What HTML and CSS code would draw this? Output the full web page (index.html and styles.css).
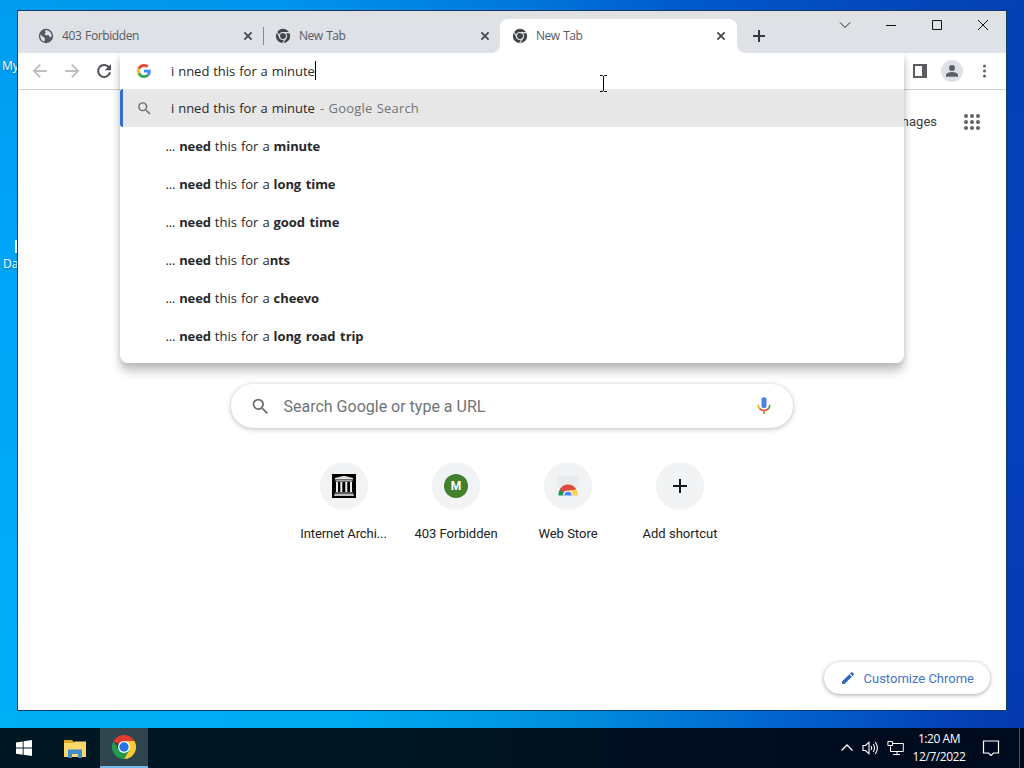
FILE: index.html
```html
<!DOCTYPE html>
<html lang="en">
<head>
<meta charset="utf-8">
<title>New Tab</title>
<link rel="stylesheet" href="styles.css">
</head>
<body>
<svg class="defs" width="0" height="0">
  <symbol id="chrome-mono" viewBox="0 0 16 16">
    <circle cx="8" cy="8" r="7.2" fill="#41464b"/>
    <g stroke="#dee1e6" stroke-width="1.1" fill="none"><path d="M8 4.6H14.6M5.1 9.7L1.8 4M10.9 9.7L7.6 15.4"/><circle cx="8" cy="8" r="3.5"/></g>
    <circle cx="8" cy="8" r="2.1" fill="#41464b"/>
  </symbol>
  <symbol id="close" viewBox="0 0 10 10"><path d="M1.4 1.4L8.6 8.6M8.6 1.4L1.4 8.6" stroke="#41464c" stroke-width="1.7"/></symbol>
  <symbol id="search" viewBox="0 0 24 24"><path fill="#6b6f73" d="M15.5 14h-.79l-.28-.27A6.47 6.47 0 0 0 16 9.5 6.5 6.5 0 1 0 9.5 16c1.61 0 3.09-.59 4.23-1.57l.27.28v.79l5 4.99L20.49 19l-4.99-5zm-6 0C7.01 14 5 11.99 5 9.5S7.01 5 9.5 5 14 7.01 14 9.5 11.99 14 9.5 14z"/></symbol>
</svg>
<div class="desktop">
  <span class="desk-label my">My</span>
  <span class="desk-mark"></span>
  <span class="desk-label da">Da</span>

  <div class="window">
    <div class="tabs">
      <div class="tab first">
        <svg width="16" height="16" viewBox="0 0 16 16"><circle cx="8" cy="8" r="7.2" fill="#565a5f"/><path d="M2.2 6.6L5.7 9.2 7 10.4 6.3 13.7C3.6 13 2 10.8 2.2 6.6ZM7.8 2.1L7 3.3 7.8 4.6 6.4 6.2 8.1 7.2 10.6 7 11.6 9 13.7 8.8C13.9 5.5 11.6 2.4 7.8 2.1Z" fill="#dee1e6"/></svg>
        <span class="tab-title long">403 Forbidden</span>
        <svg width="10" height="10"><use href="#close"/></svg>
      </div>
      <div class="tab second">
        <svg width="16" height="16"><use href="#chrome-mono"/></svg>
        <span class="tab-title">New Tab</span>
        <svg width="10" height="10"><use href="#close"/></svg>
      </div>
      <div class="tab active">
        <svg width="16" height="16"><use href="#chrome-mono"/></svg>
        <span class="tab-title">New Tab</span>
        <svg width="10" height="10"><use href="#close"/></svg>
      </div>
      <svg class="plus" width="12" height="12" viewBox="0 0 12 12"><path d="M6 0V12M0 6H12" stroke="#36393d" stroke-width="2"/></svg>
      <div class="controls">
        <svg width="46" height="28" viewBox="0 0 46 28"><path d="M18 11.5L23 16.5 28 11.5" fill="none" stroke="#222" stroke-width="1"/></svg>
        <svg width="46" height="28" viewBox="0 0 46 28"><path d="M18 14.5H28" stroke="#111"/></svg>
        <svg width="46" height="28" viewBox="0 0 46 28"><path d="M18.5 9.5H27.5V18.5H18.5Z" fill="none" stroke="#111"/></svg>
        <svg width="46" height="28" viewBox="0 0 46 28"><path d="M18 9L28 19M28 9L18 19" stroke="#111"/></svg>
      </div>
    </div>

    <div class="toolbar">
      <div class="nav">
        <svg width="16" height="16" viewBox="0 0 16 16"><path d="M15 8H2M8.2 1.6L1.8 8l6.4 6.4" fill="none" stroke="#bdbfc1" stroke-width="1.8"/></svg>
        <svg width="16" height="16" viewBox="0 0 16 16"><path d="M1 8H14M7.8 1.6L14.2 8l-6.4 6.4" fill="none" stroke="#bdbfc1" stroke-width="1.8"/></svg>
        <svg width="16" height="16" viewBox="0 0 16 16"><path d="M13.2 4.8A6 6 0 1 0 14 9.2" fill="none" stroke="#4d5156" stroke-width="2"/><path d="M15 1V7.2H8.8Z" fill="#4d5156"/></svg>
      </div>
      <div class="actions">
        <svg width="16" height="16" viewBox="0 0 16 16"><path d="M1 1H15V15H1ZM3 3V13H10V3Z" fill="#5b5c5f" fill-rule="evenodd"/></svg>
        <svg width="22" height="22" viewBox="0 0 22 22"><circle cx="11" cy="11" r="11" fill="#dfe1e9"/><circle cx="11" cy="8" r="3" fill="#5a5f68"/><path d="M5 16.8V15C5 13 8.6 12 11 12S17 13 17 15V16.8Z" fill="#5a5f68"/></svg>
        <svg width="16" height="16" viewBox="0 0 16 16"><g fill="#5f6368"><circle cx="8.5" cy="3" r="1.5"/><circle cx="8.5" cy="8" r="1.5"/><circle cx="8.5" cy="13" r="1.5"/></g></svg>
      </div>
    </div>

    <div class="page">
      <div class="page-head">
        <span>Images</span>
        <svg width="18" height="18" viewBox="0 0 18 18"><g fill="#5f6368"><circle cx="3" cy="3" r="2"/><circle cx="9" cy="3" r="2"/><circle cx="15" cy="3" r="2"/><circle cx="3" cy="9" r="2"/><circle cx="9" cy="9" r="2"/><circle cx="15" cy="9" r="2"/><circle cx="3" cy="15" r="2"/><circle cx="9" cy="15" r="2"/><circle cx="15" cy="15" r="2"/></g></svg>
      </div>
      <div class="searchbox">
        <svg width="21" height="21"><use href="#search"/></svg>
        <span>Search Google or type a URL</span>
        <svg width="20" height="20" viewBox="0 0 24 24"><rect x="9" y="1.5" width="6" height="13" rx="2.6" fill="#4c7ff0"/><path d="M5 10.5C5 13 6 14.8 7.4 16" stroke="#f4b400" stroke-width="2" fill="none"/><path d="M7 15.5C9.5 18 14.5 18 17 15.5" stroke="#ea4335" stroke-width="2" fill="none"/><path d="M19 10.5C19 13 18 14.8 16.6 16" stroke="#5a9a4e" stroke-width="2" fill="none"/><path d="M12 17.5V21.5" stroke="#c08a30" stroke-width="2"/></svg>
      </div>
      <div class="shortcuts">
        <div class="shortcut"><div class="disc">
          <svg width="24" height="24" viewBox="0 0 24 24"><rect width="24" height="24" fill="#000"/><path d="M3 5.5V4L12 1.8 21 4V5.5ZM3.5 6.3H20.5V7.5H3.5Z" fill="#ddd"/><path d="M4 8H6V18H4ZM8.3 8H10.3V18H8.3ZM13.3 8H15.3V18H13.3ZM18 8H20V18H18Z" fill="#ededed"/><path d="M3 18.5H21V19.5H3ZM2.2 20H21.8V22H2.2Z" fill="#bbb"/></svg>
        </div><span class="tight">Internet Archi...</span></div>
        <div class="shortcut"><div class="disc"><b class="monogram">M</b></div><span>403 Forbidden</span></div>
        <div class="shortcut"><div class="disc">
          <svg width="24" height="24" viewBox="0 0 24 24"><path d="M1 2H23V13H1Z" fill="#e9eaeb"/><path d="M2.5 21.5A9.5 9.5 0 0 1 5 14.2L8.5 21.5Z" fill="#189453"/><path d="M3.8 15.2A9.7 9.7 0 0 1 20.3 15.2L15 17H9L7.6 19Z" fill="#dd4b3e"/><path d="M14 16H20.5Q22 18.5 22 21.5H15.5Z" fill="#ffce44"/><path d="M7 21.5A5 5 0 0 1 17 21.5Z" fill="#f5f5f5"/><path d="M8.3 21.5A3.7 3.7 0 0 1 15.7 21.5Z" fill="#4a83ef"/></svg>
        </div><span>Web Store</span></div>
        <div class="shortcut"><div class="disc">
          <svg width="14" height="14" viewBox="0 0 14 14"><path d="M7 0V14M0 7H14" stroke="#18191b" stroke-width="2"/></svg>
        </div><span>Add shortcut</span></div>
      </div>
      <div class="customize">
        <svg width="16" height="16" viewBox="0 0 24 24"><path fill="#2f66c8" d="M3 17.25V21h3.75L17.81 9.94l-3.75-3.75zM20.71 7.04a1 1 0 0 0 0-1.41l-2.34-2.34a1 1 0 0 0-1.41 0l-1.83 1.83 3.75 3.75z"/></svg>
        <span>Customize Chrome</span>
      </div>
    </div>

    <div class="omnibox">
      <div class="query">
        <svg width="14" height="14" viewBox="0 0 48 48"><path fill="#EA4335" d="M24 9.5c3.54 0 6.71 1.22 9.21 3.6l6.85-6.85C35.9 2.38 30.47 0 24 0 14.62 0 6.51 5.38 2.56 13.22l7.98 6.19C12.43 13.72 17.74 9.5 24 9.5z"/><path fill="#4285F4" d="M46.98 24.55c0-1.57-.15-3.09-.38-4.55H24v9.02h12.94c-.58 2.96-2.26 5.48-4.78 7.18l7.73 6c4.51-4.18 7.09-10.36 7.09-17.65z"/><path fill="#FBBC05" d="M10.53 28.59A14.5 14.5 0 0 1 9.77 24c0-1.6.27-3.14.76-4.59l-7.98-6.19A23.9 23.9 0 0 0 0 24c0 3.88.92 7.54 2.56 10.78z"/><path fill="#34A853" d="M24 48c6.48 0 11.93-2.13 15.89-5.81l-7.73-6c-2.15 1.45-4.92 2.3-8.16 2.3-6.26 0-11.57-4.22-13.47-9.91l-7.98 6.19C6.51 42.62 14.62 48 24 48z"/></svg>
        <span class="typed">i nned this for a minute</span><i class="caret"></i>
      </div>
      <div class="match selected">
        <svg width="17" height="17"><use href="#search"/></svg>
        <span class="typed">i nned this for a minute</span><span class="hint">- Google Search</span>
      </div>
      <div class="match"><em>...</em> <b>need</b> this for a <b>minute</b></div>
      <div class="match"><em>...</em> <b>need</b> this for a <b>long time</b></div>
      <div class="match"><em>...</em> <b>need</b> this for a <b>good time</b></div>
      <div class="match"><em>...</em> <b>need</b> this for a<b>nts</b></div>
      <div class="match"><em>...</em> <b>need</b> this for a <b>cheevo</b></div>
      <div class="match"><em>...</em> <b>need</b> this for a <b>long road trip</b></div>
    </div>
  </div>

  <svg class="pointer" width="9" height="17" viewBox="0 0 9 17"><path d="M1 .5H3.5L4.5 1.5 5.5 .5H8M4.5 1V16M1 16.5H3.5L4.5 15.5 5.5 16.5H8" fill="none" stroke="#000"/></svg>

  <div class="taskbar">
    <div class="task"><svg width="16" height="16" viewBox="0 0 16 16"><path d="M0 2.4L6.7 1.4V7.6H0ZM7.6 1.2L16 0V7.6H7.6ZM0 8.5H6.7V14.7L0 13.7ZM7.6 8.5H16V16L7.6 14.8Z" fill="#fff"/></svg></div>
    <div class="task explorer"><svg width="22" height="19" viewBox="0 0 22 19"><path d="M0 1H8L10 3H21V6H0Z" fill="#e0a52b"/><path d="M0 4H9L11 2.5H22V18H0Z" fill="#fcd769"/><path d="M4 19V10.5H18V19H14V15H8V19Z" fill="#3f8dc9"/></svg></div>
    <div class="task current"><svg width="24" height="24" viewBox="0 0 24 24"><path d="M12 12L1.6 6A12 12 0 0 1 22.4 6Z" fill="#e33b2e"/><path d="M12 12V6H22.4A12 12 0 0 1 12 24L17.2 15Z" fill="#fcc934"/><path d="M12 12L17.2 15 12 24A12 12 0 0 1 1.6 6L6.8 15Z" fill="#219a4b"/><circle cx="12" cy="12" r="6" fill="#fff"/><circle cx="12" cy="12" r="4.7" fill="#2474e5"/></svg></div>
    <div class="tray">
      <svg width="14" height="16" viewBox="0 0 14 16"><path d="M1.5 10.5L7 5 12.5 10.5" fill="none" stroke="#fff" stroke-width="1.3"/></svg>
      <svg width="17" height="16" viewBox="0 0 17 16"><path d="M1 5.5H3.5L7 2.3V13.7L3.5 10.5H1ZM9 6Q10.3 8 9 10M11.2 4Q13.8 8 11.2 12M13.3 2Q17.5 8 13.3 14" fill="none" stroke="#fff" stroke-width="1.1"/></svg>
      <svg width="17" height="16" viewBox="0 0 17 16"><path d="M6 3.5H16.3V11.5H3.5V6.5M.9 1.5H5.5V5.5H.9ZM10 11.5V14.5M6 14.5H13" fill="none" stroke="#fff"/></svg>
      <div class="clock"><span>1:20 AM</span><span class="date">12/7/2022</span></div>
      <svg width="18" height="18" viewBox="0 0 18 18"><path d="M1.5 2H16.5V14H11.5L9 16.5 6.5 14H1.5Z" fill="none" stroke="#fff" stroke-width="1.2"/></svg>
      <i class="peek"></i>
    </div>
  </div>
</div>
</body>
</html>
```
FILE: styles.css
```css
* { box-sizing: border-box; }
body { margin: 0; font-family: "Open Sans", "Noto Sans", sans-serif; overflow: hidden; }
svg { display: block; flex: none; }
.defs { position: absolute; }
.desktop {
  position: relative; display: flex; flex-direction: column; justify-content: flex-end;
  width: 1024px; height: 768px; overflow: hidden;
  background:
    linear-gradient(90deg, #00aff5 0, #00aaf2 35%, #0090df 55%, #0262cf 77%, #0442b8 93%, #0439ae 100%) 0 711px / 100% 17px no-repeat,
    linear-gradient(90deg, #009bef 0, #0094ec 28%, #0078dc 50%, #0058ca 68%, #0449bd 85%, #0340b3 100%) 0 0 / 100% 11px no-repeat,
    linear-gradient(#009cf0, #00a5f8 35%, #00b0f7) 0 0 / 18px 100% no-repeat,
    linear-gradient(#0340b3, #0540bd 50%, #0439ae);
}
.desk-label { position: absolute; color: #fff; font-size: 12px; line-height: 16px; text-shadow: 0 1px 2px #0468; }
.my { left: 2px; top: 58px; }
.da { left: 3px; top: 256px; }
.desk-mark { position: absolute; left: 15px; top: 240px; width: 3px; height: 13px; background: #e6f5ff; }
.window {
  position: absolute; left: 17px; top: 10px; width: 990px; height: 701px;
  display: flex; flex-direction: column; background: #fff; border: 1px solid #0d3b66;
}
.tabs { display: flex; height: 42px; padding-left: 8px; background: linear-gradient(#e1e0e2, #dee1e6 8px); color: #565b61; }
.tab { display: flex; align-items: center; width: 237px; height: 34px; margin-top: 8px; padding: 0 10px 0 12px; font-size: 12px; }
.tab-title { flex: 1; margin-left: 8px; line-height: 16px; letter-spacing: -0.3px; word-spacing: 1px; }
.tab-title.long { letter-spacing: -0.4px; }
.second .tab-title, .active .tab-title { letter-spacing: -0.5px; }
.first { background: linear-gradient(#85898f, #85898f) 237px 8px / 1px 18px no-repeat; position: relative; width: 238px; padding-right: 11px; margin-right: -1px; }
.active { position: relative; padding-right: 11px; background: #fff; border-radius: 8px 8px 0 0; }
.active::before, .active::after { content: ""; position: absolute; bottom: 0; width: 8px; height: 8px; }
.active::before { left: -8px; background: radial-gradient(circle at 0 0, transparent 7.5px, #fff 8px); }
.active::after { right: -8px; background: radial-gradient(circle at 100% 0, transparent 7.5px, #fff 8px); }
.plus { margin: 19px 0 0 16px; }
.controls { display: flex; margin-left: auto; }
.toolbar { display: flex; justify-content: space-between; height: 37px; border-bottom: 1px solid #d0d2d6; background: #fff; }
.nav { display: flex; align-items: center; gap: 16px; padding-left: 14px; }
.actions { display: flex; align-items: center; gap: 13px; padding-right: 14px; }
.page { display: flex; flex-direction: column; align-items: center; flex: 1; font-family: Roboto, sans-serif; }
.page-head { align-self: stretch; display: flex; justify-content: flex-end; align-items: center; gap: 26px; height: 64px; padding-right: 25px; font-size: 13px; color: #3a3b3d; }
.page-head span { padding-bottom: 2px; }
.searchbox {
  display: flex; align-items: center; width: 562px; height: 44px; margin-top: 230px; padding: 0 19px 0 18.5px;
  border-radius: 22px; background: #fff; box-shadow: 0 1px 5px #20212450; color: #707378; font-size: 16px;
}
.searchbox span { flex: 1; margin-left: 13px; }
.shortcuts { display: flex; margin-top: 34px; }
.shortcut { display: flex; flex-direction: column; align-items: center; width: 112px; font-size: 13px; line-height: 16px; color: #202124; white-space: nowrap; }
.shortcut span { margin-top: 16px; }
.shortcut .tight { letter-spacing: -0.08px; margin-right: 1px; }
.disc { display: flex; align-items: center; justify-content: center; width: 48px; height: 48px; border-radius: 50%; background: #f1f3f4; }
.monogram { width: 24px; height: 24px; border-radius: 50%; background: #43812f; color: #fff; text-align: center; line-height: 24px; font-size: 12px; }
.customize {
  display: flex; align-items: center; align-self: flex-end; gap: 8px; width: 166px; height: 32px; margin: auto 16px 16px 0; padding-left: 15.5px;
  border-radius: 16px; box-shadow: 0 1px 4px #0000005c; color: #4874c6; font-size: 13px; white-space: nowrap;
}
.omnibox {
  position: absolute; left: 102px; top: 42px; width: 784px; height: 310px;
  background: #fff; border-radius: 0 0 8px 8px; font-size: 13px; color: #27282a;
  box-shadow: 0 9px 10px #00000033, 0 2px 6px #00000022; clip-path: inset(0 -20px -30px -20px);
}
.query, .match { display: flex; align-items: center; white-space: pre; }
.query { height: 36px; padding-left: 17px; }
.query .typed { margin-left: 20px; padding-bottom: 1px; }
.typed { width: 144px; word-spacing: 0.5px; }
.caret { width: 1px; height: 19px; margin-bottom: 2px; background: #000; }
.match { display: block; height: 38px; padding-left: 45.5px; line-height: 38px; word-spacing: 0.6px; }
.match em { font-style: normal; letter-spacing: -0.2px; }
.match b { letter-spacing: -0.1px; word-spacing: 1.4px; }
.selected { display: flex; padding-left: 13px; background: #e7e7e7; border-left: 3px solid #336fca; border-radius: 3px 0 0 3px; }
.selected .typed { margin-left: 18px; word-spacing: 0.5px; }
.hint { margin-left: 5px; color: #717477; letter-spacing: 0.2px; word-spacing: 0.6px; }
.pointer { position: absolute; left: 599px; top: 75px; }
.taskbar { display: flex; height: 40px; background: linear-gradient(90deg, #001824, #001723 35%, #000e1f 65%, #000a1e); color: #fff; }
.task { display: flex; align-items: center; justify-content: center; width: 48px; margin-right: 2px; }
.explorer { padding-left: 2px; }
.current { background: #31454f; border-bottom: 2px solid #77b9ed; }
.tray { display: flex; align-items: center; margin-left: auto; }
.tray svg + svg { margin-left: 8px; }
.clock { display: flex; flex-direction: column; align-items: center; width: 64px; margin: 0 11px 0 3px; font-size: 12px; line-height: 18px; white-space: nowrap; letter-spacing: -0.45px; }
.peek { align-self: stretch; width: 1px; margin: 0 4px 0 19px; background: #4c5361; }
```
